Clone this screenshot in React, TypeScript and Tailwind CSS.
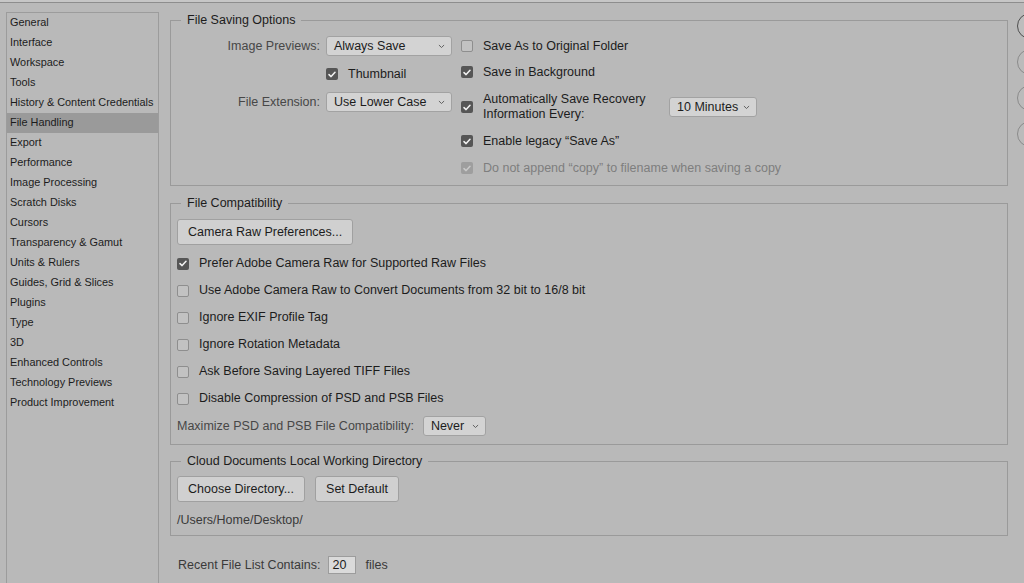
import React from 'react';

const font = { fontFamily: '"Liberation Sans", Arial, sans-serif' };

const sections = [
  'General',
  'Interface',
  'Workspace',
  'Tools',
  'History & Content Credentials',
  'File Handling',
  'Export',
  'Performance',
  'Image Processing',
  'Scratch Disks',
  'Cursors',
  'Transparency & Gamut',
  'Units & Rulers',
  'Guides, Grid & Slices',
  'Plugins',
  'Type',
  '3D',
  'Enhanced Controls',
  'Technology Previews',
  'Product Improvement',
];

function Check({ on, disabled }: { on?: boolean; disabled?: boolean }) {
  if (on) {
    return (
      <span
        className={`flex h-[12px] w-[12px] shrink-0 items-center justify-center rounded-[2px] ${
          disabled ? 'bg-[#9e9e9e]' : 'bg-[#565656]'
        }`}
      >
        <svg width="8" height="7" viewBox="0 0 8 7" fill="none">
          <path
            d="M1 3.6L3.1 5.6L7 1.2"
            stroke={disabled ? '#c9c9c9' : '#f2f2f2'}
            strokeWidth="1.5"
            strokeLinecap="round"
            strokeLinejoin="round"
          />
        </svg>
      </span>
    );
  }
  return <span className="h-[12px] w-[12px] shrink-0 rounded-[2px] border border-[#8e8e8e] bg-[#c2c2c2]" />;
}

function Chevron() {
  return (
    <svg width="7" height="5" viewBox="0 0 7 5" fill="none" className="shrink-0">
      <path d="M1.2 1.3L3.5 3.5L5.8 1.3" stroke="#555" strokeWidth="0.9" strokeLinecap="round" />
    </svg>
  );
}

function Select({ value, width }: { value: string; width: string }) {
  return (
    <div
      className={`flex h-[20px] ${width} items-center justify-between rounded-[3px] border border-[#a2a2a2] bg-[#d3d3d3] pl-[7px] pr-[6px] text-[#1c1c1c]`}
    >
      <span>{value}</span>
      <Chevron />
    </div>
  );
}

function Button({ children }: { children: React.ReactNode }) {
  return (
    <div className="flex h-[26px] items-center rounded-[3px] border border-[#a0a0a0] bg-[#d0d0d0] px-[10px] text-[#1c1c1c]">
      {children}
    </div>
  );
}

function CheckRow({ on, label, disabled }: { on?: boolean; label: string; disabled?: boolean }) {
  return (
    <div className="flex h-[27px] items-center gap-[10px]">
      <Check on={on} disabled={disabled} />
      <span className={disabled ? 'text-[#7e7e7e]' : 'text-[#1c1c1c]'}>{label}</span>
    </div>
  );
}

function Legend({ children }: { children: React.ReactNode }) {
  return <legend className="ml-[10px] px-[6px] leading-[16px] text-[#1c1c1c]">{children}</legend>;
}

export default function App() {
  return (
    <div className="relative h-[583px] w-[1024px] overflow-hidden bg-[#b9b9b9] text-[12.5px]" style={font}>
      <div className="h-[3px] border-b border-[#8d8d8d] bg-[#c6c6c6]" />
      <div className="flex">
        <div className="ml-[6px] mt-[9px] h-[600px] w-[153px] shrink-0 border border-[#9c9c9c]">
          {sections.map((s) => (
            <div
              key={s}
              className={`flex h-[20px] items-center pb-[1px] pl-[3px] text-[10.9px] text-[#1c1c1c] ${
                s === 'File Handling' ? 'bg-[#9a9a9a]' : ''
              }`}
            >
              {s}
            </div>
          ))}
        </div>

        <div className="ml-[11px] mt-[9px] w-[838px] shrink-0">
          <fieldset className="border border-[#9a9a9a] pb-[7px]">
            <Legend>File Saving Options</Legend>
            <div className="flex">
              <div className="flex w-[286px] shrink-0 flex-col pt-[8px]">
                <div className="flex h-[20px] items-center">
                  <span className="w-[155px] pr-[6px] text-right text-[#474747]">Image Previews:</span>
                  <Select value="Always Save" width="w-[126px]" />
                </div>
                <div className="mt-[8px] flex h-[20px] items-center gap-[10px] pl-[155px]">
                  <Check on />
                  <span className="text-[#1c1c1c]">Thumbnail</span>
                </div>
                <div className="mt-[8px] flex h-[20px] items-center">
                  <span className="w-[155px] pr-[6px] text-right text-[#474747]">File Extension:</span>
                  <Select value="Use Lower Case" width="w-[126px]" />
                </div>
              </div>
              <div className="ml-[4px] flex flex-col pt-[8px]">
                <div className="flex h-[20px] items-center gap-[10px]">
                  <Check />
                  <span className="text-[#1c1c1c]">Save As to Original Folder</span>
                </div>
                <div className="mt-[6px] flex h-[20px] items-center gap-[10px]">
                  <Check on />
                  <span className="text-[#1c1c1c]">Save in Background</span>
                </div>
                <div className="mt-[10px] flex h-[30px] items-center gap-[10px]">
                  <Check on />
                  <span className="w-[176px] leading-[15px] text-[#1c1c1c]">
                    Automatically Save Recovery Information Every:
                  </span>
                  <Select value="10 Minutes" width="w-[88px]" />
                </div>
                <div className="mt-[9px] flex h-[20px] items-center gap-[10px]">
                  <Check on />
                  <span className="text-[#1c1c1c]">Enable legacy “Save As”</span>
                </div>
                <div className="mt-[7px] flex h-[20px] items-center gap-[10px]">
                  <Check on disabled />
                  <span className="text-[#7e7e7e]">Do not append “copy” to filename when saving a copy</span>
                </div>
              </div>
            </div>
          </fieldset>

          <fieldset className="mt-[9px] border border-[#9a9a9a] pb-[8px]">
            <Legend>File Compatibility</Legend>
            <div className="px-[6px]">
              <div className="mt-[8px] flex">
                <Button>Camera Raw Preferences...</Button>
              </div>
              <div className="mt-[5px] flex flex-col">
                <CheckRow on label="Prefer Adobe Camera Raw for Supported Raw Files" />
                <CheckRow label="Use Adobe Camera Raw to Convert Documents from 32 bit to 16/8 bit" />
                <CheckRow label="Ignore EXIF Profile Tag" />
                <CheckRow label="Ignore Rotation Metadata" />
                <CheckRow label="Ask Before Saving Layered TIFF Files" />
                <CheckRow label="Disable Compression of PSD and PSB Files" />
              </div>
              <div className="mt-[4px] flex h-[20px] items-center gap-[9px]">
                <span className="text-[#474747]">Maximize PSD and PSB File Compatibility:</span>
                <Select value="Never" width="w-[63px]" />
              </div>
            </div>
          </fieldset>

          <fieldset className="mt-[8px] border border-[#9a9a9a] pb-[7px]">
            <Legend>Cloud Documents Local Working Directory</Legend>
            <div className="px-[6px]">
              <div className="mt-[7px] flex gap-[10px]">
                <Button>Choose Directory...</Button>
                <Button>Set Default</Button>
              </div>
              <div className="mt-[10px] h-[16px] leading-[16px] text-[#3a3a3a]">/Users/Home/Desktop/</div>
            </div>
          </fieldset>

          <div className="ml-[8px] mt-[20px] flex h-[18px] items-center">
            <span className="text-[#3a3a3a]">Recent File List Contains:</span>
            <div className="ml-[8px] flex h-[18px] w-[28px] items-center border border-[#9c9c9c] bg-[#dadada] pl-[3px] text-[#1c1c1c]">
              20
            </div>
            <span className="ml-[9px] text-[#3a3a3a]">files</span>
          </div>
        </div>

        <div className="ml-[9px] mt-[10px] flex shrink-0 flex-col gap-[10px]">
          <div className="h-[26px] w-[80px] rounded-full border border-[#4e4e4e] bg-[#bdbdbd]" />
          <div className="h-[26px] w-[80px] rounded-full border border-[#8a8a8a] bg-[#bbbbbb]" />
          <div className="h-[26px] w-[80px] rounded-full border border-[#8a8a8a] bg-[#bbbbbb]" />
          <div className="h-[26px] w-[80px] rounded-full border border-[#8a8a8a] bg-[#bbbbbb]" />
        </div>
      </div>
    </div>
  );
}
